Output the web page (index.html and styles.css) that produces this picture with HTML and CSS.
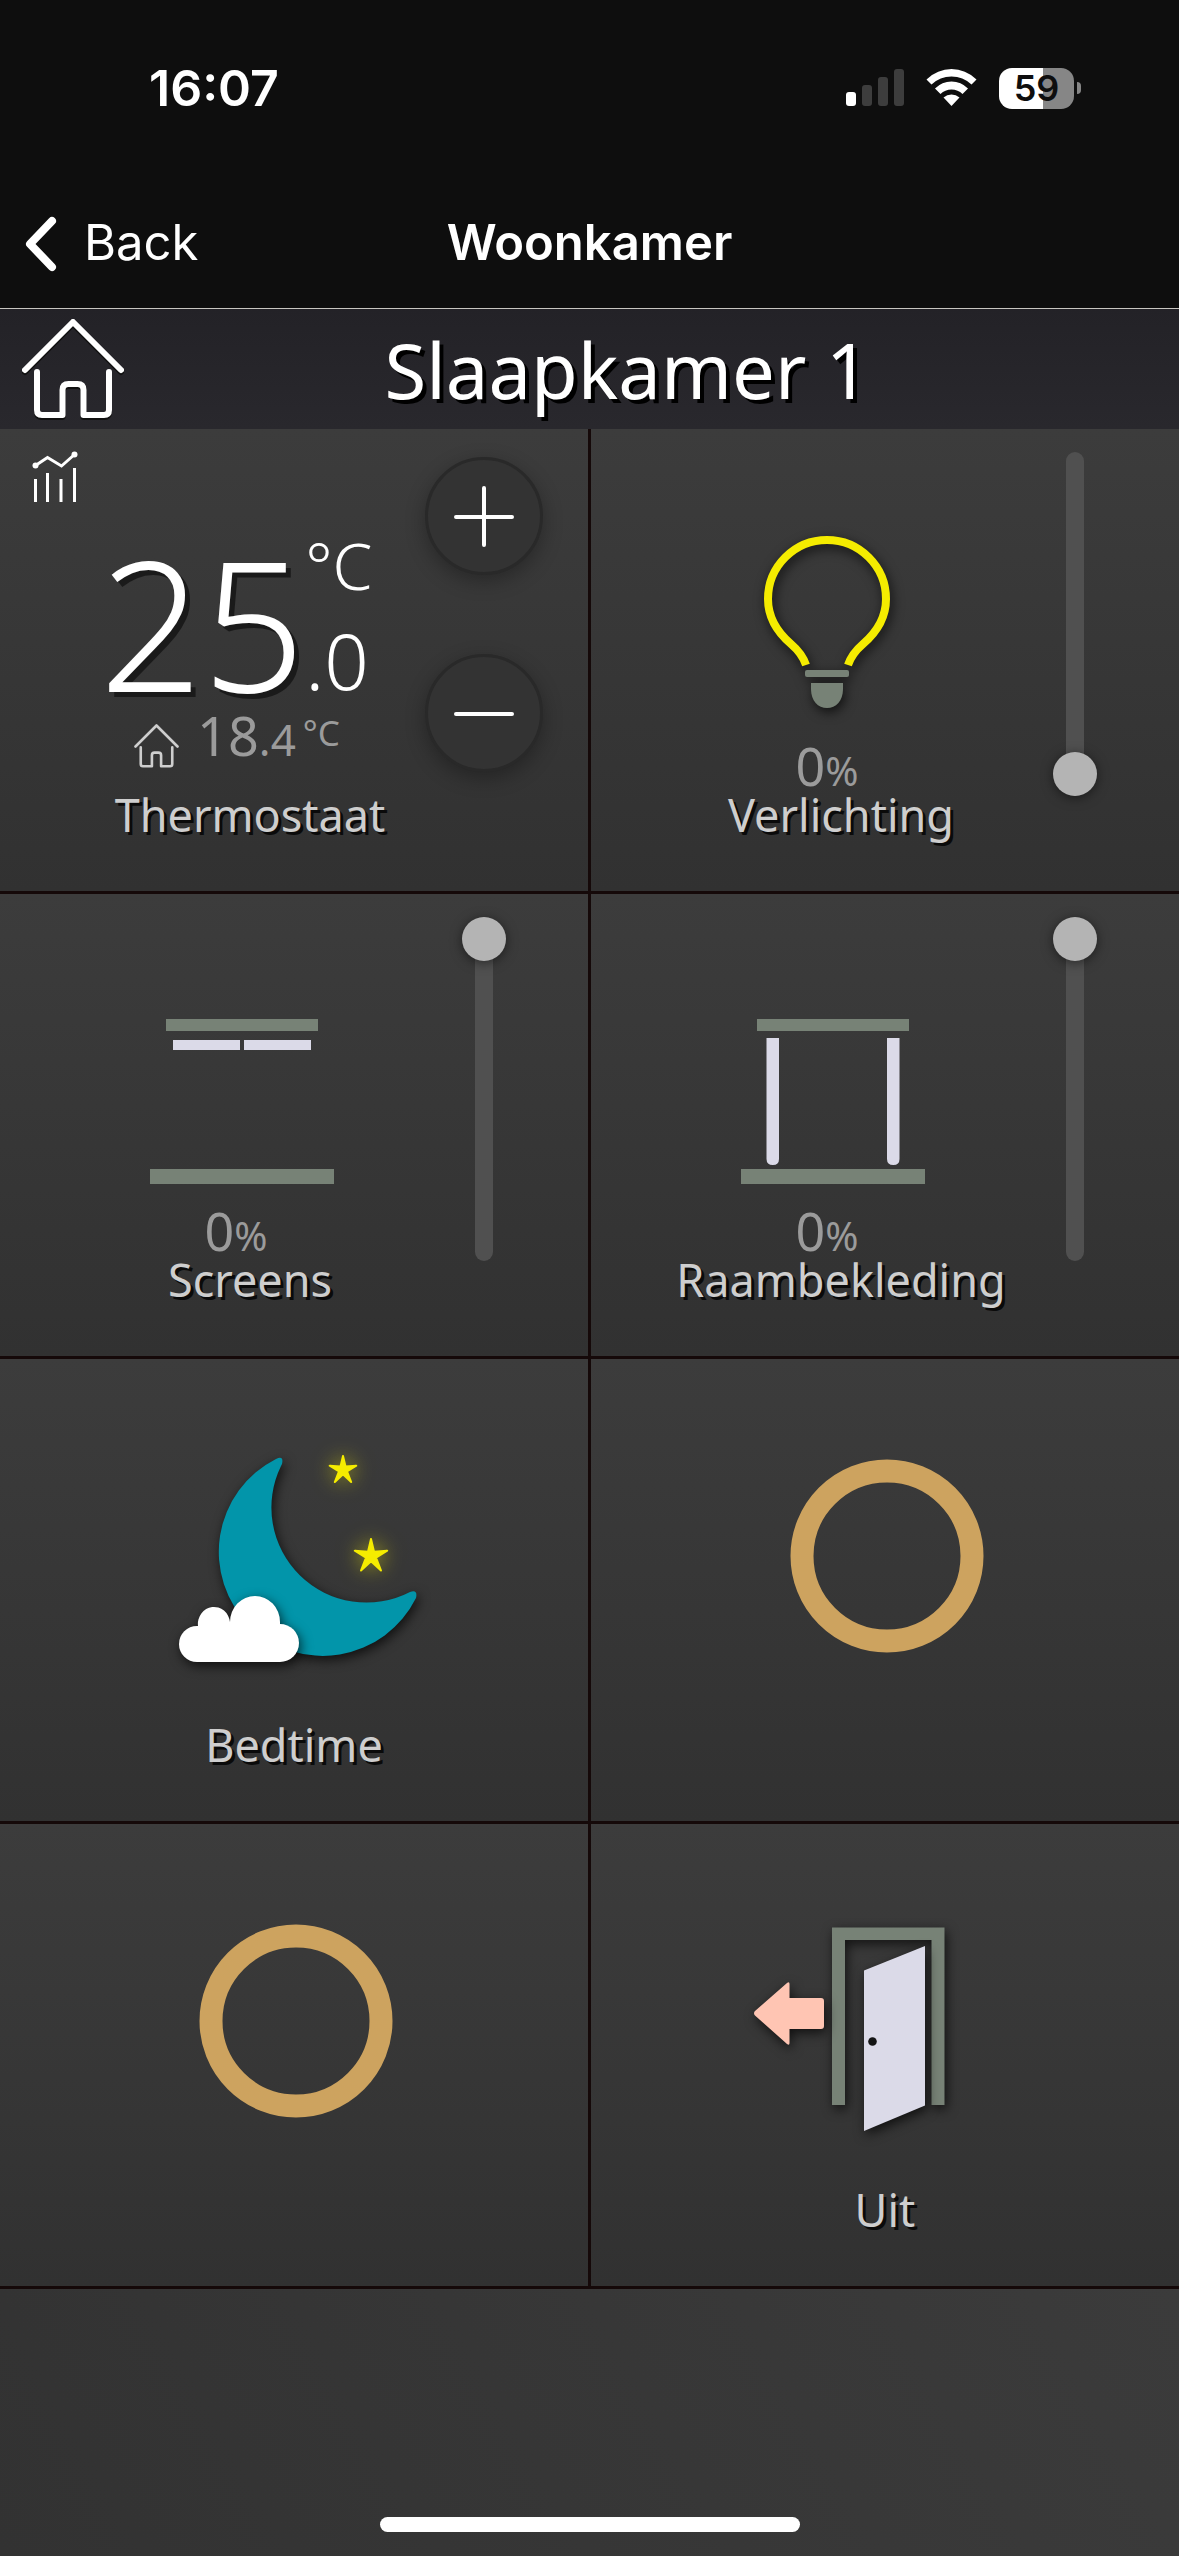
FILE: index.html
```html
<!DOCTYPE html>
<html lang="nl">
<head>
<meta charset="utf-8">
<meta name="viewport" content="width=device-width, initial-scale=1">
<title>Slaapkamer 1</title>
<link rel="stylesheet" href="styles.css">
</head>
<body>
<svg class="defs" aria-hidden="true">
  <symbol id="house" viewBox="0 0 112 112">
    <path d="M8 56 56 8l48 48M20 58v38q0 5 5 5h20.500V76q0-6 6-6h9q6 0 6 6v25H87q5 0 5-5V58"/>
  </symbol>
</svg>

<header class="top">
  <div class="status">
    <time class="clock">16:07</time>
    <div class="indicators">
      <svg class="signal" width="58" height="38" viewBox="0 0 58 38" aria-hidden="true">
        <rect class="bar-on" y="23" width="10" height="14" rx="3"/>
        <rect x="16" y="16" width="10" height="21" rx="3"/>
        <rect x="32" y="8" width="10" height="29" rx="3"/>
        <rect x="48" width="10" height="37" rx="3"/>
      </svg>
      <svg class="wifi" width="51" height="38" viewBox="0 0 51 38" aria-hidden="true">
        <path d="M0.500 10.500Q11.500 0 25.500 0T50.500 10.500L45.500 15.500Q37 7.500 25.500 7.500T5.500 15.500Z"/>
        <path d="M9 19.500Q16 12.500 25.500 12.500T42 19.500L36.500 25Q32 20.500 25.500 20.500T14.500 25Z"/>
        <path d="M17.500 28.500Q21 25.500 25.500 25.500T33.500 28.500L25.500 37Z"/>
      </svg>
      <div class="battery"><span class="charge">59</span><span class="nub"></span></div>
    </div>
  </div>
  <nav class="nav">
    <button class="back" type="button">
      <svg width="40" height="60" viewBox="0 0 40 60" aria-hidden="true"><path d="M30 8 8 31l22 23"/></svg>
      Back
    </button>
    <span class="nav-title">Woonkamer</span>
  </nav>
</header>

<main class="page">
  <div class="titlebar">
    <button class="home" type="button" aria-label="Home"><svg class="house"><use href="#house"/></svg></button>
    <h1 class="title">Slaapkamer 1</h1>
  </div>

  <div class="tiles">
    <section class="tile control">
      <button class="history" type="button" aria-label="Grafiek">
        <svg width="52" height="56" viewBox="0 0 52 56" aria-hidden="true">
          <path d="M8.500 29v23M20.500 23v29M34 29v23M47.500 18v34"/>
          <path d="M8.500 15.500 20.500 7.500 34.500 16 47.500 4.500"/>
          <circle cx="8.500" cy="15.500" r="3"/><circle cx="47.500" cy="4.500" r="3"/>
        </svg>
      </button>
      <div class="info thermostat">
        <div class="setpoint">
          <span class="degrees">25</span>
          <span class="stack"><span class="unit">°C</span><span class="decimal">.0</span></span>
        </div>
        <div class="room">
          <svg class="room-icon" aria-hidden="true"><use href="#house"/></svg>
          <span class="measured">18<span class="fraction">.4</span><span class="room-unit">°C</span></span>
        </div>
        <h2 class="label">Thermostaat</h2>
      </div>
      <div class="steps">
        <button class="step" type="button" aria-label="Warmer"><svg width="60" height="60" viewBox="0 0 60 60"><path d="M30 2v57M2 31h56"/></svg></button>
        <button class="step" type="button" aria-label="Kouder"><svg width="60" height="60" viewBox="0 0 60 60"><path d="M2 31h56"/></svg></button>
      </div>
    </section>

    <section class="tile control">
      <div class="info">
        <svg class="icon shaded" viewBox="0 0 200 200" aria-hidden="true">
          <path class="glow-line" d="M79 136C76 127 71 121 64 115C50 103 41 89 41 70A59 59 0 0 1 159 70C159 89 150 103 136 115C129 121 124 127 121 136"/>
          <rect class="sage" x="78" y="141" width="44" height="7" rx="2"/>
          <path class="sage" d="M84 154h32v6c0 12-7 19-16 19s-16-7-16-19Z"/>
        </svg>
        <p class="value">0<span class="percent">%</span></p>
        <label class="label" for="light">Verlichting</label>
      </div>
      <input class="slider" id="light" type="range" min="0" max="100" value="0">
    </section>

    <section class="tile control">
      <div class="info">
        <svg class="icon" viewBox="0 0 200 200" aria-hidden="true">
          <path class="sage" d="M30 25h152v12H30zM14 175h184v15H14z"/>
          <path class="pale" d="M37 46h67v10H37zM108 46h67v10h-67z"/>
        </svg>
        <p class="value">0<span class="percent">%</span></p>
        <label class="label" for="screens">Screens</label>
      </div>
      <input class="slider" id="screens" type="range" min="0" max="100" value="100">
    </section>

    <section class="tile control">
      <div class="info">
        <svg class="icon" viewBox="0 0 200 200" aria-hidden="true">
          <path class="sage" d="M30 25h152v12H30zM14 175h184v15H14z"/>
          <path class="pale" d="M39.500 44h12.500v121q0 6-6.200 6t-6.300-6zM160 44h12.500v121q0 6-6.200 6t-6.300-6z"/>
        </svg>
        <p class="value">0<span class="percent">%</span></p>
        <label class="label" for="curtains">Raambekleding</label>
      </div>
      <input class="slider" id="curtains" type="range" min="0" max="100" value="100">
    </section>

    <button class="tile scene" type="button">
      <svg class="picture" viewBox="0 0 260 210" aria-hidden="true">
        <path class="moon shaded" d="M112 4Q120 0 118 9L117 11A95 95 0 0 0 246 137Q254 134 252 143A104 104 0 1 1 112 4Z"/>
        <g class="cloud shaded">
          <circle cx="33" cy="189" r="18"/><circle cx="116" cy="188" r="19"/>
          <path d="M33 171h1A16 17 0 0 1 66 167A25 26 0 0 1 116 167V169V207H33Z"/>
        </g>
        <path class="star" transform="translate(179 15)" d="M0-14 2.500-3.500 13.300-4.300 4 1.300 8.200 12 0 4.300-8.200 12-4 1.300-13.300-4.300-2.500-3.500Z"/>
        <path class="star" transform="translate(207 101)" d="M0-17 3-4.300 16.200-5.300 5 1.600 10 14.500 0 5.300-10 14.500-5 1.600-16.200-5.300-3-4.300Z"/>
      </svg>
      <span class="label">Bedtime</span>
    </button>

    <button class="tile scene" type="button" aria-label="Scene">
      <svg class="picture" viewBox="0 0 260 210" aria-hidden="true"><circle class="ring" cx="132" cy="101" r="85"/></svg>
    </button>

    <button class="tile scene" type="button" aria-label="Scene">
      <svg class="picture" viewBox="0 0 260 210" aria-hidden="true"><circle class="ring" cx="132" cy="101" r="85"/></svg>
    </button>

    <button class="tile scene" type="button">
      <svg class="picture" viewBox="0 0 260 210" aria-hidden="true">
        <path class="sage shaded" d="M77 185V7.500h112.500V185h-13V20H90v165Z"/>
        <path class="pale shaded" d="M109 50.500 170 26v159.500L109 211Z"/>
        <circle class="knob" cx="117.500" cy="121.500" r="4.300"/>
        <path class="arrow shaded" d="M0 91 32 63q2.500-2 2.500 1v14H66q3 0 3 3v25q0 3-3 3H34.500v14q0 3-2.500 1L0 95.500q-2-2.300 0-4.500Z"/>
      </svg>
      <span class="label">Uit</span>
    </button>
  </div>

  <div class="rest"><span class="home-indicator"></span></div>
</main>
</body>
</html>
```

FILE: styles.css
```css
* { box-sizing: border-box; }

body {
  margin: 0;
  min-height: 100vh;
  display: flex;
  flex-direction: column;
  background: #363636;
  color: #fff;
  font-family: "Noto Sans", "Open Sans", sans-serif;
}

button {
  margin: 0;
  padding: 0;
  border: 0;
  background: none;
  color: inherit;
  font: inherit;
}

h1, h2, p { margin: 0; font-weight: 400; }
svg { display: block; overflow: visible; }
.defs { position: absolute; width: 0; height: 0; }

/* Status and navigation bars */
.top {
  background: #0e0e0e;
  border-bottom: 1px solid #c8c5c0;
  font-family: Inter, "Liberation Sans", sans-serif;
}

.status {
  height: 176px;
  padding: 0 98px 0 149px;
  display: flex;
  align-items: center;
  justify-content: space-between;
}

.clock { font-size: 50px; font-weight: 600; line-height: 60px; }
.indicators { display: flex; align-items: center; gap: 22px; }
.signal { fill: #3d3d3d; }
.signal .bar-on, .wifi { fill: #fff; }

.battery { display: flex; align-items: center; gap: 3px; }
.charge {
  width: 75px;
  height: 41px;
  border-radius: 13px;
  background: linear-gradient(90deg, #fff 59%, #868686 59%);
  color: #0e0e0e;
  font-size: 36px;
  font-weight: 600;
  line-height: 41px;
  text-align: center;
}
.nub { width: 4px; height: 12px; border-radius: 0 4px 4px 0; background: #868686; }

.nav {
  height: 132px;
  padding-top: 2px;
  display: grid;
  grid-template-columns: 1fr auto 1fr;
  align-items: center;
  font-size: 49px;
  line-height: 60px;
}
.back { padding-left: 22px; display: flex; align-items: center; gap: 22px; }
.back path { fill: none; stroke: #fff; stroke-width: 8; stroke-linecap: round; stroke-linejoin: round; }
.nav-title { font-weight: 600; }

/* Room title */
.page { flex: 1; display: flex; flex-direction: column; }

.titlebar {
  height: 120px;
  padding: 2px 54px 0 17px;
  display: flex;
  align-items: center;
  background: linear-gradient(#232227, #29282d);
}
.house { width: 112px; height: 112px; filter: drop-shadow(0 2px 0 #111); }
.house, .room-icon { fill: none; stroke: #fff; stroke-width: 6; stroke-linecap: round; stroke-linejoin: round; }
.title { flex: 1; font-size: 76px; line-height: 104px; text-align: center; text-shadow: 4px 4px #000; }

/* Tiles */
.tiles {
  display: grid;
  grid-template-columns: 1fr 1fr;
  gap: 3px;
  border-bottom: 3px solid #150909;
  background: #150909;
}
.tile {
  position: relative;
  min-height: 462px;
  display: flex;
  background: linear-gradient(#3c3c3c, #313131);
}
.label {
  color: #cecece;
  font-size: 45px;
  line-height: 60px;
  text-align: center;
  white-space: nowrap;
  text-shadow: 3px 3px #0a0a0a;
}

.info {
  flex: 1;
  padding: 100px 0 0 75px;
  display: flex;
  flex-direction: column;
}
.icon { width: 200px; height: 200px; margin: 0 28px 18px 0; align-self: center; }
.value {
  padding-right: 28px;
  color: #9b9b9b;
  font-size: 52px;
  line-height: 38px;
  text-align: center;
}
.percent { font-size: 40px; line-height: 0; }

.sage { fill: #778276; }
.pale { fill: #dbdae8; }
.glow-line { fill: none; stroke: #f5ec00; stroke-width: 8; }
.shaded { filter: drop-shadow(2px 4px 6px rgba(0, 0, 0, 0.7)); }

.slider {
  appearance: none;
  writing-mode: vertical-lr;
  direction: rtl;
  width: 44px;
  height: 344px;
  margin: 23px 82px 0 37px;
  background: none;
}
.slider::-webkit-slider-runnable-track {
  width: 18px;
  height: 344px;
  border-radius: 9px;
  background: #505050;
}
.slider::-webkit-slider-thumb {
  appearance: none;
  width: 44px;
  height: 44px;
  margin-left: -13px;
  border-radius: 50%;
  background: #b4b4b4;
  box-shadow: 0 2px 12px rgba(0, 0, 0, 0.5);
}

/* Thermostat */
.history { position: absolute; top: 21px; left: 27px; }
.history path { fill: none; stroke: #fff; stroke-width: 3; }
.history circle { fill: #fff; }

.thermostat { padding-top: 107px; }
.setpoint {
  padding-right: 28px;
  display: flex;
  justify-content: center;
  align-items: flex-end;
  font-weight: 300;
}
.degrees { font-size: 180px; line-height: 152px; text-shadow: 5px 5px #1a1a1a; }
.stack { display: flex; flex-direction: column; gap: 25px; }
.unit { font-size: 64px; line-height: 60px; }
.decimal { font-size: 78px; line-height: 78px; }

.room {
  padding: 0 28px 14px 0;
  display: flex;
  justify-content: center;
  align-items: flex-end;
  gap: 16px;
  color: #9b9b9b;
}
.room-icon { width: 49px; height: 49px; stroke: #cecece; }
.measured { font-size: 54px; line-height: 72px; }
.fraction { font-size: 44px; line-height: 0; }
.room-unit { margin-left: 7px; font-size: 35px; line-height: 0; vertical-align: 10px; }

.steps {
  padding: 28px 45px 0 0;
  display: flex;
  flex-direction: column;
  gap: 79px;
}
.step {
  width: 118px;
  height: 118px;
  display: grid;
  place-items: center;
  border: 3px solid #292929;
  border-radius: 50%;
  background: #333;
  box-shadow: 0 6px 20px rgba(0, 0, 0, 0.3);
}
.step path { fill: none; stroke: #fff; stroke-width: 4; stroke-linecap: round; }

/* Scenes */
.scene {
  padding-top: 96px;
  flex-direction: column;
  align-items: center;
  gap: 50px;
}
.picture { width: 260px; height: 210px; }
.moon { fill: #0295aa; }
.cloud { fill: #fff; }
.star {
  fill: #f5ec00;
  stroke: #f5ec00;
  stroke-width: 2;
  stroke-linejoin: round;
  filter: drop-shadow(0 0 10px rgba(245, 236, 0, 0.6));
}
.ring { fill: none; stroke: #cda35f; stroke-width: 23; }
.knob { fill: #141414; }
.arrow { fill: #ffc5b3; }

/* Space below the tiles */
.rest {
  flex: 1;
  min-height: 80px;
  padding-bottom: 24px;
  display: flex;
  justify-content: center;
  align-items: flex-end;
  background: linear-gradient(60deg, #323232, #3b3b3b);
}
.home-indicator { width: 420px; height: 15px; border-radius: 8px; background: #fff; }
```
